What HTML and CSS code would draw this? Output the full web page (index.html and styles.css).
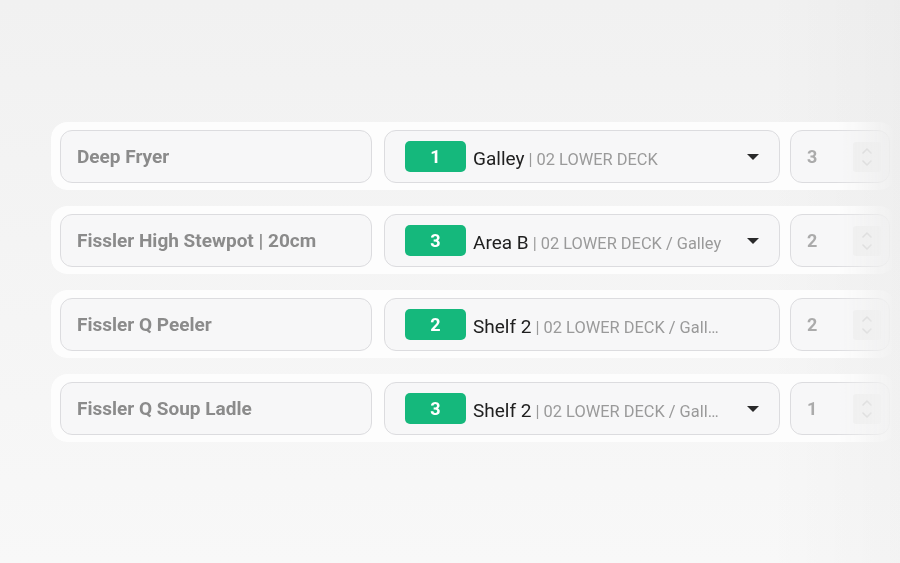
FILE: index.html
```html
<!DOCTYPE html>
<html lang="en">
<head>
    <meta charset="UTF-8">
    <meta name="viewport" content="width=device-width, initial-scale=1.0">
    <title>Inventory locations</title>
    <link rel="stylesheet" href="styles.css">
</head>
<body>
    <div class="list">
        <div class="row">
            <div class="field name">Deep Fryer</div>
            <div class="field location">
                <span class="badge">1</span>
                <span class="label"><b>Galley</b> | 02 LOWER DECK</span>
                <span class="caret"></span>
            </div>
            <div class="field qty">
                <span class="num">3</span>
                <span class="spin"><svg viewBox="0 0 14 24" width="14" height="24"><path d="M3 8l4-4 4 4M3 16l4 4 4-4" fill="none" stroke="#cfcfcf" stroke-width="1.6" stroke-linecap="round" stroke-linejoin="round"/></svg></span>
            </div>
        </div>
        <div class="row">
            <div class="field name">Fissler High Stewpot | 20cm</div>
            <div class="field location">
                <span class="badge">3</span>
                <span class="label"><b>Area B</b> | 02 LOWER DECK / Galley</span>
                <span class="caret"></span>
            </div>
            <div class="field qty">
                <span class="num">2</span>
                <span class="spin"><svg viewBox="0 0 14 24" width="14" height="24"><path d="M3 8l4-4 4 4M3 16l4 4 4-4" fill="none" stroke="#cfcfcf" stroke-width="1.6" stroke-linecap="round" stroke-linejoin="round"/></svg></span>
            </div>
        </div>
        <div class="row">
            <div class="field name">Fissler Q Peeler</div>
            <div class="field location">
                <span class="badge">2</span>
                <span class="label"><b>Shelf 2</b> | 02 LOWER DECK / Galley</span>
            </div>
            <div class="field qty">
                <span class="num">2</span>
                <span class="spin"><svg viewBox="0 0 14 24" width="14" height="24"><path d="M3 8l4-4 4 4M3 16l4 4 4-4" fill="none" stroke="#cfcfcf" stroke-width="1.6" stroke-linecap="round" stroke-linejoin="round"/></svg></span>
            </div>
        </div>
        <div class="row">
            <div class="field name">Fissler Q Soup Ladle</div>
            <div class="field location">
                <span class="badge">3</span>
                <span class="label"><b>Shelf 2</b> | 02 LOWER DECK / Galley</span>
                <span class="caret"></span>
            </div>
            <div class="field qty">
                <span class="num">1</span>
                <span class="spin"><svg viewBox="0 0 14 24" width="14" height="24"><path d="M3 8l4-4 4 4M3 16l4 4 4-4" fill="none" stroke="#cfcfcf" stroke-width="1.6" stroke-linecap="round" stroke-linejoin="round"/></svg></span>
            </div>
        </div>
    </div>
</body>
</html>
```

FILE: styles.css
```css
*{
    margin: 0;
    padding: 0;
    box-sizing: border-box;
}
html, body{
    height: 100%;
}
body{
    font-family: Roboto, "Liberation Sans", sans-serif;
    background:
        linear-gradient(to right, rgba(0,0,0,0) 85%, rgba(0,0,0,0.02)),
        linear-gradient(to bottom, #f1f1f1, #f8f8f8);
    overflow: hidden;
}

.list{
    display: flex;
    flex-direction: column;
    gap: 16px;
    padding: 122px 0 0 51px;
}

.row{
    display: flex;
    gap: 12px;
    width: 845px;
    height: 68px;
    padding: 8px 9px 7px;
    background: #fdfdfd;
    border-radius: 16px;
    overflow: hidden;
    -webkit-mask-image: linear-gradient(to right, #000 calc(100% - 60px), transparent);
    mask-image: linear-gradient(to right, #000 calc(100% - 60px), transparent);
}

.field{
    display: flex;
    align-items: center;
    flex-shrink: 0;
    height: 53px;
    background: #f7f7f8;
    border: 1px solid #dcdcdf;
    border-radius: 12px;
}

.name{
    width: 312px;
    padding-left: 16px;
    font-size: 19px;
    font-weight: 700;
    color: #8b8b8b;
}

.location{
    width: 396px;
    padding: 0 20px;
}
.badge{
    width: 61px;
    height: 31px;
    line-height: 31px;
    border-radius: 5px;
    background: #15b87c;
    color: #ffffff;
    font-size: 18px;
    font-weight: 700;
    text-align: center;
    flex-shrink: 0;
}
.label{
    margin-left: 7px;
    padding-top: 3px;
    width: 250px;
    white-space: nowrap;
    overflow: hidden;
    text-overflow: ellipsis;
    font-size: 16.4px;
    color: #9a9a9a;
}
.label b{
    font-weight: 400;
    font-size: 19px;
    color: #202020;
}
.caret{
    margin-left: auto;
    width: 0;
    height: 0;
    border-left: 6px solid transparent;
    border-right: 6px solid transparent;
    border-top: 6px solid #2a2a2a;
}

.qty{
    width: 100px;
    margin-left: -2px;
    padding: 0 8px 0 16px;
    justify-content: space-between;
    font-size: 18px;
    font-weight: 700;
    color: #ababab;
}
.spin{
    width: 28px;
    height: 30px;
    display: flex;
    align-items: center;
    justify-content: center;
    background: #efefef;
    border-radius: 3px;
}
```
